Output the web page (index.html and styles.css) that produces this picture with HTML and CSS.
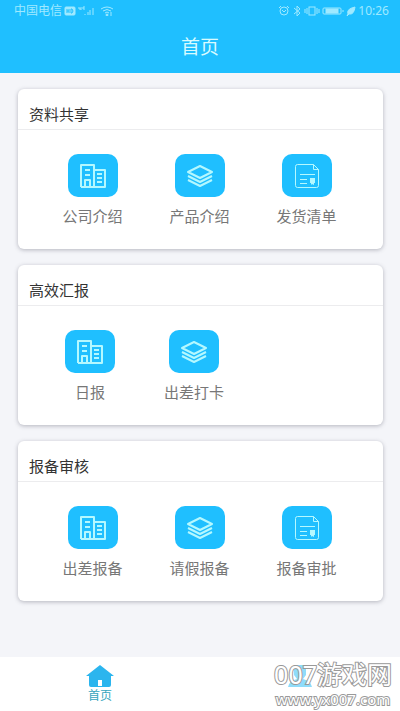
FILE: index.html
```html
<!DOCTYPE html>
<html lang="zh-CN">
<head>
<meta charset="utf-8">
<meta name="viewport" content="width=device-width, initial-scale=1">
<title>首页</title>
<link rel="stylesheet" href="styles.css">
</head>
<body>
<svg class="defs" aria-hidden="true">
  <symbol id="building" viewBox="0 0 28 26">
    <path d="M2 24V2h13v22M15 7h11v17H2M6 24v-7h5v7M6 7h5M6 12h5M18 11h5M18 15h5M18 19h5"/>
  </symbol>
  <symbol id="layers" viewBox="0 0 28 26">
    <path d="M14 3L26 9L14 15L2 9zM2 13l12 6l12-6M2 17l12 6l12-6"/>
  </symbol>
  <symbol id="document" viewBox="0 0 28 26">
    <path class="thin" d="M20.5 1.5H4.5Q2.500 1.500 2.500 3.500v19q0 2 2 2h19q2 0 2-2V6.500zM20.500 1.500v5h5M7 11.500h15M7 16.500h7M7 20.500h7"/>
    <path class="solid" d="M17 15h5v5h-1v2l-2-1l-1 1v-2h-1z"/>
  </symbol>
</svg>
<header class="header">
  <div class="status">
    <div class="status-group">
      <span class="carrier">中国电信</span>
      <svg width="12" height="10" viewBox="0 0 12 10"><rect class="fill" x="1" y="1" width="10" height="8" rx="1"/><path class="cut" d="M3 3v4M3 5h2M5 3v4M7 3v4h1q2-2 0-4z"/></svg>
      <svg class="signal" width="16" height="10" viewBox="0 0 16 10"><path d="M1 1v2h2M3 1v3M5 1h2M5 1v2h2M7 9V8M10 9V6M12 9V4M15 9V2"/></svg>
      <svg width="14" height="10" viewBox="0 0 14 10"><path d="M1 3q6-4 12 0M3 5q4-3 8 0M5 7q2-2 4 0"/><circle class="fill" cx="7" cy="9" r="1"/><path d="M11 6v4"/></svg>
    </div>
    <div class="status-group">
      <svg width="12" height="12" viewBox="0 0 12 12"><circle cx="6" cy="6" r="4"/><path d="M1 3l2-2M9 1l2 2M4 5l2 2l2-2"/></svg>
      <svg width="10" height="12" viewBox="0 0 10 12"><path d="M2 3l6 5l-3 3V1l3 3l-6 5"/></svg>
      <svg width="16" height="12" viewBox="0 0 16 12"><rect x="5" y="2" width="6" height="8"/><path d="M3 3v6M13 3v6M1 4v4M15 4v4"/></svg>
      <svg class="battery" width="22" height="10" viewBox="0 0 22 10"><rect x="1" y="2" width="18" height="6" rx="1"/><rect class="fill" x="4" y="3" width="12" height="4"/><path d="M21 4v2"/></svg>
      <svg width="10" height="10" viewBox="0 0 10 10"><path class="fill" d="M2 8Q0 3 9 1Q8 9 3 8l-2 2z"/></svg>
      <time class="clock">10:26</time>
    </div>
  </div>
  <h1 class="title">首页</h1>
</header>
<main class="content">
  <section class="card">
    <h2 class="card-title">资料共享</h2>
    <div class="items">
      <a class="item" href="#"><span class="tile"><svg><use href="#building"/></svg></span>公司介绍</a>
      <a class="item" href="#"><span class="tile"><svg><use href="#layers"/></svg></span>产品介绍</a>
      <a class="item" href="#"><span class="tile"><svg><use href="#document"/></svg></span>发货清单</a>
    </div>
  </section>
  <section class="card">
    <h2 class="card-title">高效汇报</h2>
    <div class="items items-pair">
      <a class="item" href="#"><span class="tile"><svg><use href="#building"/></svg></span>日报</a>
      <a class="item" href="#"><span class="tile"><svg><use href="#layers"/></svg></span>出差打卡</a>
    </div>
  </section>
  <section class="card">
    <h2 class="card-title">报备审核</h2>
    <div class="items">
      <a class="item" href="#"><span class="tile"><svg><use href="#building"/></svg></span>出差报备</a>
      <a class="item" href="#"><span class="tile"><svg><use href="#layers"/></svg></span>请假报备</a>
      <a class="item" href="#"><span class="tile"><svg><use href="#document"/></svg></span>报备审批</a>
    </div>
  </section>
</main>
<nav class="tabs">
  <a class="tab" href="#">
    <svg width="28" height="22" viewBox="0 0 28 22"><path d="M14 0L28 11h-3v9q0 2-2 2H5q-2 0-2-2v-9H0zM12 15v6h4v-6z" fill-rule="evenodd"/></svg>
    首页
  </a>
  <a class="tab tab-user" href="#" aria-label="我的">
    <svg width="24" height="22" viewBox="0 0 24 22"><path d="M6 0h12v10l-3 4q8 2 9 8H0q1-6 9-8l-3-4z"/></svg>
  </a>
  <div class="mark">
    <span class="mark-name">007游戏网</span>
    <span class="mark-site">www.yx007.com</span>
  </div>
</nav>
</body>
</html>
```
FILE: styles.css
```css
* {
  box-sizing: border-box;
}

body {
  margin: 0;
  min-height: 100vh;
  display: flex;
  flex-direction: column;
  background: #f4f5f9;
  font-family: "Liberation Sans", "Noto Sans CJK SC", sans-serif;
}

a {
  color: inherit;
  text-decoration: none;
}

svg {
  fill: none;
  stroke: currentColor;
}

.defs {
  position: absolute;
  width: 0;
  height: 0;
}

.fill {
  fill: currentColor;
}

.header {
  height: 73px;
  background: #1fbfff;
  color: #d9fbff;
}

.status {
  display: flex;
  justify-content: space-between;
  height: 22px;
  padding: 0 11px 0 14px;
  color: #9fe9ff;
}

.status-group {
  display: flex;
  align-items: center;
  gap: 2px;
}

.carrier {
  font-size: 12px;
  line-height: 20px;
}

.cut {
  stroke: #1fbfff;
}

.signal {
  margin-right: 4px;
}

.clock {
  font: 12px/20px "Noto Sans", sans-serif;
}

.title {
  margin: 0;
  padding-top: 11px;
  font-size: 19px;
  line-height: 30px;
  font-weight: 400;
  text-align: center;
}

.content {
  flex: 1;
  display: flex;
  flex-direction: column;
  gap: 16px;
  padding: 16px 17px 16px 18px;
}

.card {
  height: 160px;
  border-radius: 6px;
  background: #fff;
  box-shadow: 0 1px 4px rgba(60, 60, 80, 0.35);
}

.card-title {
  margin: 0;
  padding: 11px 11px 0;
  height: 41px;
  border-bottom: 1px solid #ececee;
  color: #333;
  font-size: 15px;
  line-height: 30px;
  font-weight: 400;
}

.items {
  display: grid;
  grid-template-columns: repeat(3, 1fr);
  padding: 24px 23px 0 21px;
}

.items-pair {
  padding: 24px 33px 0 20px;
}

.item {
  display: flex;
  flex-direction: column;
  align-items: center;
  gap: 10px;
  color: #777;
  font-size: 15px;
  line-height: 20px;
}

.tile {
  display: flex;
  align-items: center;
  justify-content: center;
  width: 50px;
  height: 43px;
  border-radius: 10px;
  background: #1fbfff;
  color: #b4f8ff;
}

.tile svg {
  width: 28px;
  height: 26px;
  stroke-width: 2;
  stroke-linejoin: round;
}

.thin {
  stroke-width: 1;
}

.solid {
  fill: currentColor;
  stroke: none;
}

.tabs {
  position: relative;
  display: grid;
  grid-template-columns: 1fr 1fr;
  height: 54px;
  background: #fff;
}

.tab {
  display: flex;
  flex-direction: column;
  align-items: center;
  padding-top: 8px;
  color: #35a5bd;
  font-size: 12px;
  line-height: 18px;
}

.tab svg {
  fill: #2bb5ee;
  stroke: none;
}

.tab-user svg {
  fill: #8fdcfa;
}

.mark {
  position: absolute;
  right: 8px;
  bottom: 4px;
  display: flex;
  flex-direction: column;
  align-items: center;
  gap: 4px;
  color: #fff;
  -webkit-text-stroke: 2px #999;
  paint-order: stroke fill;
  pointer-events: none;
}

.mark-name {
  font-family: "Noto Sans", "Noto Sans CJK SC", sans-serif;
  font-size: 25px;
  line-height: 25px;
}

.mark-site {
  font-family: "Noto Sans", sans-serif;
  font-size: 15px;
  line-height: 16px;
}
```
